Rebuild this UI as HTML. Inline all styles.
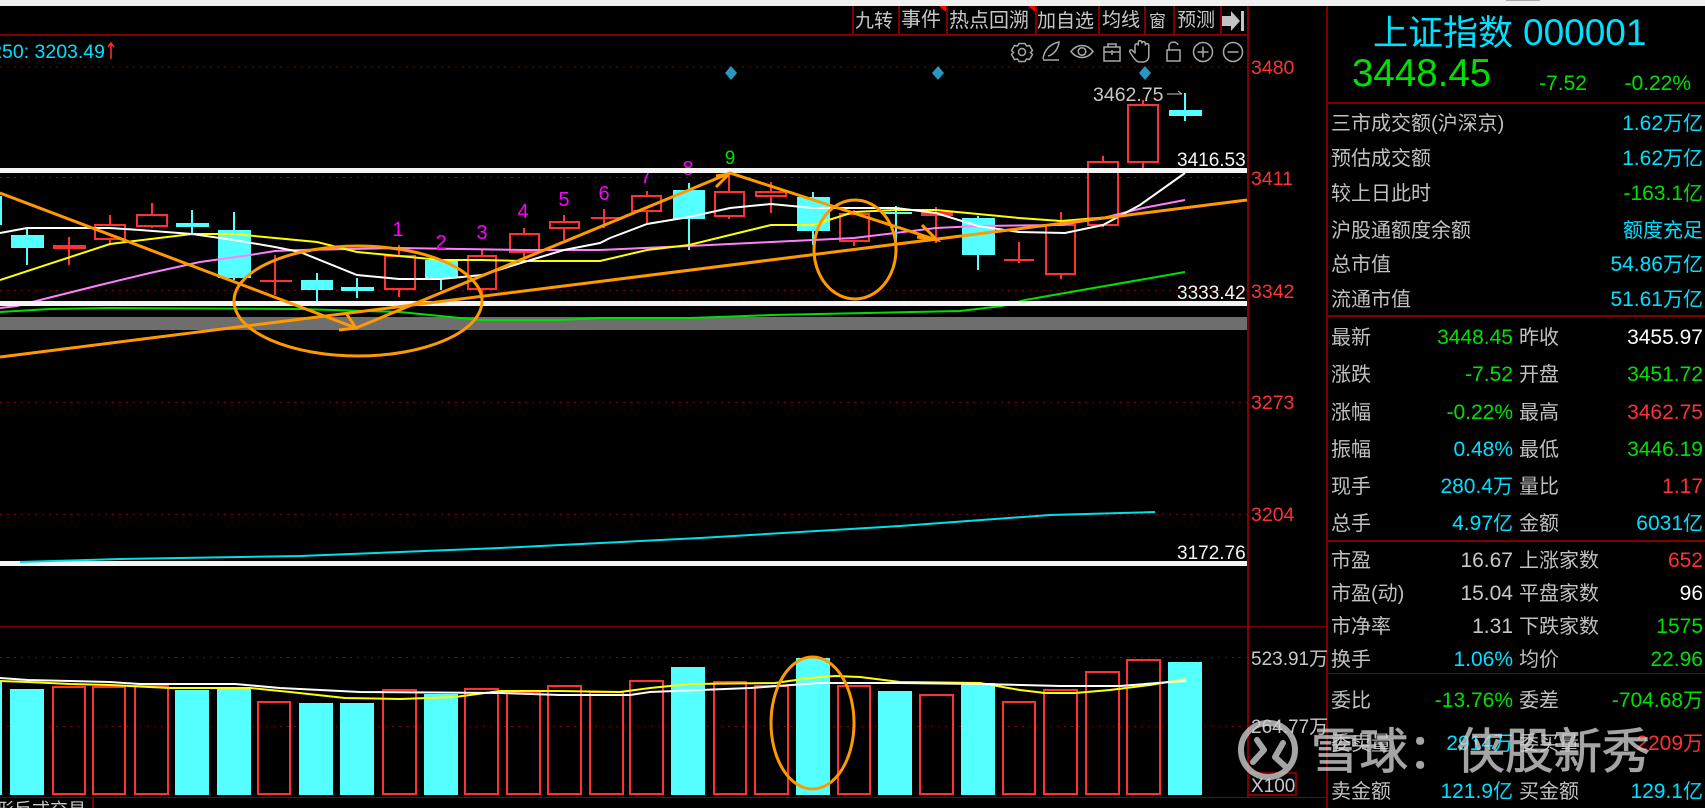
<!DOCTYPE html>
<html lang="zh">
<head>
<meta charset="utf-8">
<title>上证指数</title>
<style>
html,body{margin:0;padding:0;background:#000;width:1705px;height:808px;overflow:hidden}
svg{position:absolute;left:0;top:0;display:block}
text{font-family:"Liberation Sans","Noto Sans CJK SC",sans-serif;font-size:21px;dominant-baseline:auto}
tspan{font-size:20px}
.l{fill:#c0c0c0;font-size:20px}
.c{fill:#00e0ff;text-anchor:end}
.g{fill:#00e000;text-anchor:end}
.r{fill:#ff3232;text-anchor:end}
.w{fill:#fff;text-anchor:end}
.s{fill:#c8c8c8;text-anchor:end}
.t{fill:#c8c8c8;font-size:19px}
.b{fill:#c8c8c8;font-size:18px}
.a{fill:#ff3232;font-size:19.500px}
.m{fill:#f0f;font-size:20px;text-anchor:middle}
.p{fill:#f4f4f4;font-size:19px}
</style>
</head>
<body>
<svg width="1705" height="808" viewBox="0 0 1705 808" xmlns="http://www.w3.org/2000/svg">
<rect width="1705" height="808" fill="#000"/>
<rect width="1705" height="6" fill="#f0f0f0"/>
<rect x="1506" y="0" width="34" height="1" fill="#aaa"/>

<!-- frame lines -->
<g fill="#800000" shape-rendering="crispEdges">
<rect x="0" y="34" width="1248" height="2"/>
<rect x="1247" y="6" width="2" height="792"/>
<rect x="1326" y="6" width="2" height="802"/>
<rect x="1328" y="102" width="377" height="2"/>
<rect x="1328" y="315" width="377" height="2"/>
<rect x="1328" y="540" width="377" height="2"/>
<rect x="1328" y="673" width="377" height="1"/>
<rect x="0" y="626" width="1327" height="1"/>
<rect x="0" y="797" width="1327" height="1"/>
<rect x="852" y="6" width="2" height="28"/>
<rect x="898" y="6" width="2" height="28"/>
<rect x="946" y="6" width="2" height="28"/>
<rect x="1035" y="6" width="2" height="28"/>
<rect x="1098" y="6" width="2" height="28"/>
<rect x="1144" y="6" width="2" height="28"/>
<rect x="1173" y="6" width="2" height="28"/>
<rect x="1220" y="6" width="2" height="28"/>
<rect x="92" y="797" width="2" height="11"/>
</g>
<!-- dotted grid -->
<g stroke="#800000" stroke-width="1" stroke-dasharray="2 5" shape-rendering="crispEdges">
<path d="M0 67H1247M0 177.500H1247M0 290.500H1247M0 402.500H1247M0 514.500H1247M0 657.500H1247M0 726.500H1247" fill="none"/>
</g>

<!-- toolbar -->
<g>
<text x="855" y="27" class="t">九转</text>
<text x="901" y="26" style="font-size:20px;fill:#c8c8c8">事件</text>
<text x="949" y="27" style="font-size:20px;fill:#c8c8c8">热点回溯</text>
<text x="1037" y="27" class="t">加自选</text>
<text x="1102" y="26" class="t">均线</text>
<text x="1149" y="27" style="font-size:17px;fill:#c8c8c8">窗</text>
<text x="1177" y="26" class="t">预测</text>
</g>
<polygon points="939,6 946,6 946,12" fill="#f00"/>
<polygon points="1028,6 1035,6 1035,12" fill="#f00"/>
<polygon points="1222,16 1231,16 1231,11 1240,21 1231,31 1231,26 1222,26" fill="#c4c4c4"/>
<rect x="1241" y="11" width="3" height="20" fill="#c4c4c4"/>

<!-- chart icons -->
<g fill="none" stroke="#a8a8a8" stroke-width="1.500">
<path d="M1019 43.500h6l1.500 2.500 3-.5 3 5-2 2 2 2-3 5-3-.5-1.500 2.500h-6l-1.500-2.500-3 .5-3-5 2-2-2-2 3-5 3 .5z" stroke-linejoin="round"/>
<circle cx="1022" cy="52" r="3.500"/>
<path d="M1043 59c1-9 7-15 16-17-1 8-6 13-11 14M1043 60h16"/>
<path d="M1071 51.500c6-8 16-8 22 0-6 8-16 8-22 0z"/>
<circle cx="1082" cy="51.500" r="3.800"/>
<path d="M1104 47h16v14h-16zM1104 52h16M1108 47v-3h8v3M1112 50v5"/>
<path d="M1135 53v-8a1.800 1.800 0 0 1 3.300 0v-3a1.800 1.800 0 0 1 3.500 0v1a1.800 1.800 0 0 1 3.500 0v2a1.800 1.800 0 0 1 3.500 0v11c0 3-2 6-6 6h-3c-3 0-4-2-6-4l-4-6c-1-2 2-3 3-1z" stroke-linejoin="round"/>
<path d="M1167 50h13v11h-13zM1169 50v-4c0-5 8-5 9-1"/>
<circle cx="1203" cy="52" r="9.500"/><path d="M1197.500 52h11M1203 46.500v11"/>
<circle cx="1233" cy="52" r="9.500"/><path d="M1227.500 52h11"/>
</g>

<!-- legend -->
<text x="105" y="58" style="font-size:19.500px;fill:#00e0ff;text-anchor:end">250: 3203.49</text>
<path d="M111 43v16M108 47l3-4 3 4" fill="none" stroke="#ff3232" stroke-width="1.500"/>

<!-- diamonds -->
<g fill="#2a96c4">
<polygon points="731,66 737,73 731,80 725,73"/>
<polygon points="938,66 944,73 938,80 932,73"/>
<polygon points="1145,66 1151,73 1145,80 1139,73"/>
</g>

<!-- gray band under everything -->
<rect x="0" y="317" width="1247" height="13" fill="#6e6e6e" shape-rendering="crispEdges"/>

<!-- candles: cyan -->
<g fill="#54ffff" shape-rendering="crispEdges">
<rect x="0" y="196" width="2" height="29"/>
<rect x="11" y="235" width="33" height="13"/><rect x="26" y="228" width="2" height="37"/>
<rect x="176" y="223" width="33" height="4"/><rect x="191" y="210" width="2" height="25"/>
<rect x="218" y="230" width="33" height="48"/><rect x="233" y="212" width="2" height="68"/>
<rect x="301" y="280" width="32" height="10"/><rect x="316" y="273" width="2" height="29"/>
<rect x="341" y="287" width="33" height="4"/><rect x="356" y="278" width="2" height="20"/>
<rect x="425" y="260" width="33" height="18"/><rect x="440" y="278" width="2" height="12"/>
<rect x="673" y="190" width="32" height="29"/><rect x="688" y="183" width="2" height="67"/>
<rect x="797" y="197" width="33" height="34"/><rect x="812" y="192" width="2" height="53"/>
<rect x="881" y="212" width="31" height="2"/><rect x="895" y="206" width="2" height="42"/>
<rect x="962" y="218" width="33" height="37"/><rect x="977" y="216" width="2" height="54"/>
<rect x="1169" y="110" width="33" height="6"/><rect x="1184" y="93" width="2" height="28"/>
</g>
<!-- candles: red -->
<g fill="#ff3232" shape-rendering="crispEdges">
<rect x="53" y="245" width="33" height="4"/><rect x="68" y="237" width="2" height="28"/>
<rect x="260" y="280" width="32" height="2"/><rect x="274" y="255" width="2" height="40"/>
<rect x="591" y="217" width="29" height="2"/><rect x="603" y="209" width="2" height="19"/>
<rect x="921" y="212" width="32" height="4"/><rect x="935" y="207" width="2" height="36"/>
<rect x="1004" y="259" width="30" height="2"/><rect x="1018" y="242" width="2" height="21"/>
<rect x="109" y="215" width="2" height="9"/><rect x="109" y="240" width="2" height="4"/>
<rect x="151" y="203" width="2" height="11"/><rect x="151" y="227" width="2" height="1"/>
<rect x="398" y="245" width="2" height="10"/><rect x="398" y="290" width="2" height="7"/>
<rect x="481" y="250" width="2" height="5"/><rect x="481" y="290" width="2" height="5"/>
<rect x="523" y="228" width="2" height="5"/><rect x="523" y="253" width="2" height="5"/>
<rect x="563" y="215" width="2" height="6"/><rect x="563" y="229" width="2" height="11"/>
<rect x="646" y="191" width="2" height="4"/><rect x="646" y="212" width="2" height="11"/>
<rect x="728" y="176" width="2" height="15"/><rect x="728" y="217" width="2" height="2"/>
<rect x="770" y="182" width="2" height="9"/><rect x="770" y="197" width="2" height="16"/>
<rect x="853" y="210" width="2" height="3"/><rect x="853" y="242" width="2" height="4"/>
<rect x="1060" y="212" width="2" height="12"/><rect x="1060" y="275" width="2" height="4"/>
<rect x="1102" y="156" width="2" height="5"/><rect x="1102" y="226" width="2" height="1"/>
<rect x="1142" y="100" width="2" height="4"/><rect x="1142" y="163" width="2" height="5"/>
</g>
<g fill="none" stroke="#ff3232" stroke-width="2" shape-rendering="crispEdges">
<rect x="95" y="225" width="30" height="14"/>
<rect x="137" y="215" width="30" height="11"/>
<rect x="385" y="256" width="30" height="33"/>
<rect x="468" y="256" width="28" height="33"/>
<rect x="510" y="234" width="29" height="18"/>
<rect x="550" y="222" width="29" height="6"/>
<rect x="632" y="196" width="29" height="15"/>
<rect x="715" y="192" width="29" height="24"/>
<rect x="756" y="192" width="30" height="4"/>
<rect x="840" y="214" width="29" height="27"/>
<rect x="1046" y="225" width="29" height="49"/>
<rect x="1088" y="162" width="30" height="63"/>
<rect x="1128" y="105" width="30" height="57"/>
</g>

<!-- moving averages -->
<g fill="none" stroke-width="2">
<polyline stroke="#00e000" points="0,312 50,309 110,308 300,309 400,312 480,320 560,320 600,318 690,318 772,315 960,311 1002,306 1025,300 1185,272"/>
<polyline stroke="#ff80ff" points="0,308 17,306 40,300 100,285 150,273 200,262 250,255 275,251 300,250 399,248 524,250 600,250 689,246 771,242 813,240 854,238 936,228 978,226 1061,225 1103,218 1143,208 1185,200"/>
<polyline stroke="#ffff00" points="0,280 110,244 192,234 234,234 275,238 317,242 357,252 399,256 441,260 482,260 524,261 600,261 647,250 689,245 771,225 813,225 854,212 896,210 936,210 978,214 1019,218 1061,221 1110,217"/>
<polyline stroke="#ffffff" points="0,233 27,228 110,228 140,230 192,234 234,240 275,247 300,252 357,275 399,279 441,279 482,275 524,262 564,250 600,243 610,238 647,224 689,217 730,208 771,204 813,208 854,208 896,208 936,213 978,226 1019,232 1065,233 1103,225 1140,205 1185,173"/>
</g>

<!-- TD numbers -->
<text x="398" y="236" class="m">1</text>
<text x="441" y="249" class="m">2</text>
<text x="482" y="239" class="m">3</text>
<text x="523" y="218" class="m">4</text>
<text x="564" y="206" class="m">5</text>
<text x="604" y="200" class="m">6</text>
<text x="646" y="183" class="m">7</text>
<text x="688" y="175" class="m">8</text>
<text x="730" y="164" class="m" style="fill:#00e000;font-size:19px">9</text>

<!-- annotation bars -->
<g shape-rendering="crispEdges">
<rect x="0" y="168" width="1247" height="5" fill="#f4f4f4"/>
<rect x="0" y="301" width="1247" height="5" fill="#f4f4f4"/>
<rect x="0" y="561" width="1247" height="5" fill="#f4f4f4"/>
</g>

<!-- lower cyan MA -->
<polyline fill="none" stroke="#00e0e8" stroke-width="2" points="20,562 120,559 300,556 500,548 700,538 900,526 1050,515 1155,512"/>

<!-- orange annotations -->
<g fill="none" stroke="#ff9900" stroke-width="3">
<path d="M0 193L356 328L730 173L937 240"/>
<path d="M0 357L1247 200"/>
<path d="M339 330L356 328L346 313"/>
<path d="M716 187L729 174L716 176"/>
<path d="M922 225L937 240L917 237"/>
<ellipse cx="358" cy="301" rx="124" ry="55"/>
<ellipse cx="855" cy="249.500" rx="41" ry="49.500"/>
</g>

<!-- price tags -->
<text x="1093" y="101" class="t" style="font-size:19.500px">3462.75</text>
<path d="M1167 94h15M1182 94v0M1178 91l4 3" stroke="#c8c8c8" fill="none" stroke-width="1"/>
<text x="1177" y="166" class="p">3416.53</text>
<text x="1177" y="299" class="p">3333.42</text>
<text x="1177" y="559" class="p">3172.76</text>

<!-- axis -->
<text x="1251" y="74" class="a">3480</text>
<text x="1251" y="185" class="a">3411</text>
<text x="1251" y="298" class="a">3342</text>
<text x="1251" y="409" class="a">3273</text>
<text x="1251" y="521" class="a">3204</text>
<text x="1251" y="665" class="t">523.91万</text>
<text x="1251" y="733" class="t">264.77万</text>

<!-- volume bars -->
<g fill="#54ffff" shape-rendering="crispEdges">
<rect x="0" y="682" width="2" height="113"/>
<rect x="10" y="689" width="34" height="106"/>
<rect x="175" y="690" width="34" height="105"/>
<rect x="217" y="688" width="34" height="107"/>
<rect x="299" y="703" width="34" height="92"/>
<rect x="340" y="703" width="34" height="92"/>
<rect x="424" y="694" width="34" height="101"/>
<rect x="671" y="667" width="34" height="128"/>
<rect x="796" y="658" width="34" height="137"/>
<rect x="878" y="691" width="34" height="104"/>
<rect x="961" y="683" width="34" height="112"/>
<rect x="1168" y="662" width="34" height="133"/>
</g>
<g fill="none" stroke="#ff3232" stroke-width="2" shape-rendering="crispEdges">
<rect x="53" y="687" width="32" height="107"/>
<rect x="93" y="687" width="32" height="107"/>
<rect x="135" y="686" width="33" height="108"/>
<rect x="258" y="702" width="32" height="92"/>
<rect x="383" y="690" width="33" height="104"/>
<rect x="465" y="689" width="33" height="105"/>
<rect x="507" y="692" width="33" height="102"/>
<rect x="548" y="686" width="33" height="108"/>
<rect x="590" y="692" width="33" height="102"/>
<rect x="630" y="681" width="33" height="113"/>
<rect x="714" y="682" width="32" height="112"/>
<rect x="755" y="686" width="33" height="108"/>
<rect x="838" y="686" width="32" height="108"/>
<rect x="920" y="695" width="33" height="99"/>
<rect x="1003" y="702" width="32" height="92"/>
<rect x="1044" y="690" width="33" height="104"/>
<rect x="1086" y="672" width="33" height="122"/>
<rect x="1127" y="660" width="33" height="134"/>
</g>
<g fill="none" stroke-width="2">
<polyline stroke="#ffff00" points="0,681 28,682 70,684 110,685 170,688 250,688 290,692 345,698 400,699 455,697 500,691 560,691 620,692 650,688 690,684 775,683 810,678 835,676 860,677 900,682 980,683 1020,690 1045,693 1075,693 1110,690 1150,685 1186,679"/>
<polyline stroke="#ffffff" points="0,678 28,680 70,681 110,682 140,684 235,684 280,688 360,692 500,693 560,695 630,695 650,692 750,688 820,683 900,683 980,684 1060,686 1120,686 1170,682 1186,681"/>
</g>
<ellipse cx="812.500" cy="723" rx="41.500" ry="66" fill="none" stroke="#ff9900" stroke-width="3"/>

<!-- X100 box -->
<rect x="1248" y="773" width="48" height="22" fill="none" stroke="#800000" stroke-width="2"/>
<text x="1251" y="792" class="t">X100</text>

<!-- bottom tab -->
<text x="-4" y="816" style="font-size:18px;fill:#c8c8c8">形反式交易</text>

<!-- right panel header -->
<text x="1373" y="45" style="font-size:35px;fill:#00e0ff">上证指数</text>
<text x="1523" y="45" style="font-size:37px;fill:#00e0ff">000001</text>
<text x="1352" y="86" style="font-size:38.500px;fill:#00e000">3448.45</text>
<text x="1587" y="90" class="g">-7.52</text>
<text x="1691" y="90" class="g">-0.22%</text>

<!-- block 1 -->
<g>
<text x="1331" y="130" class="l">三市成交额(沪深京)</text><text x="1703" y="130" class="c">1.62<tspan>万亿</tspan></text>
<text x="1331" y="165" class="l">预估成交额</text><text x="1703" y="165" class="c">1.62<tspan>万亿</tspan></text>
<text x="1331" y="200" class="l">较上日此时</text><text x="1703" y="200" class="g">-163.1<tspan>亿</tspan></text>
<text x="1331" y="237" class="l">沪股通额度余额</text><text x="1703" y="237" class="c" style="font-size:20px">额度充足</text>
<text x="1331" y="271" class="l">总市值</text><text x="1703" y="271" class="c">54.86<tspan>万亿</tspan></text>
<text x="1331" y="306" class="l">流通市值</text><text x="1703" y="306" class="c">51.61<tspan>万亿</tspan></text>
</g>

<!-- block 2 -->
<g>
<text x="1331" y="344" class="l">最新</text><text x="1513" y="344" class="g">3448.45</text><text x="1519" y="344" class="l">昨收</text><text x="1703" y="344" class="w">3455.97</text>
<text x="1331" y="381" class="l">涨跌</text><text x="1513" y="381" class="g">-7.52</text><text x="1519" y="381" class="l">开盘</text><text x="1703" y="381" class="g">3451.72</text>
<text x="1331" y="419" class="l">涨幅</text><text x="1513" y="419" class="g">-0.22%</text><text x="1519" y="419" class="l">最高</text><text x="1703" y="419" class="r">3462.75</text>
<text x="1331" y="456" class="l">振幅</text><text x="1513" y="456" class="c">0.48%</text><text x="1519" y="456" class="l">最低</text><text x="1703" y="456" class="g">3446.19</text>
<text x="1331" y="493" class="l">现手</text><text x="1513" y="493" class="c">280.4<tspan>万</tspan></text><text x="1519" y="493" class="l">量比</text><text x="1703" y="493" class="r">1.17</text>
<text x="1331" y="530" class="l">总手</text><text x="1513" y="530" class="c">4.97<tspan>亿</tspan></text><text x="1519" y="530" class="l">金额</text><text x="1703" y="530" class="c">6031<tspan>亿</tspan></text>
</g>

<!-- block 3 -->
<g>
<text x="1331" y="567" class="l">市盈</text><text x="1513" y="567" class="s">16.67</text><text x="1519" y="567" class="l">上涨家数</text><text x="1703" y="567" class="r">652</text>
<text x="1331" y="600" class="l">市盈(动)</text><text x="1513" y="600" class="s">15.04</text><text x="1519" y="600" class="l">平盘家数</text><text x="1703" y="600" class="w">96</text>
<text x="1331" y="633" class="l">市净率</text><text x="1513" y="633" class="s">1.31</text><text x="1519" y="633" class="l">下跌家数</text><text x="1703" y="633" class="g">1575</text>
<text x="1331" y="666" class="l">换手</text><text x="1513" y="666" class="c">1.06%</text><text x="1519" y="666" class="l">均价</text><text x="1703" y="666" class="g">22.96</text>
</g>

<!-- block 4 -->
<g>
<text x="1331" y="707" class="l">委比</text><text x="1513" y="707" class="g">-13.76%</text><text x="1519" y="707" class="l">委差</text><text x="1703" y="707" class="g">-704.68<tspan>万</tspan></text>
<text x="1331" y="750" class="l">委卖量</text><text x="1513" y="750" class="c">2914<tspan>万</tspan></text><text x="1519" y="750" class="l">委买量</text><text x="1703" y="750" class="r">2209<tspan>万</tspan></text>
<text x="1331" y="798" class="l">卖金额</text><text x="1513" y="798" class="c">121.9<tspan>亿</tspan></text><text x="1519" y="798" class="l">买金额</text><text x="1703" y="798" class="c">129.1<tspan>亿</tspan></text>
</g>

<!-- watermark -->
<g opacity=".78">
<circle cx="1268" cy="750" r="27" fill="none" stroke="#d2d2d2" stroke-width="6"/>
<path d="M1257 740L1264 750L1253 762" fill="none" stroke="#d2d2d2" stroke-width="6" stroke-linecap="round" stroke-linejoin="round"/>
<path d="M1283 743L1275 757L1287 768" fill="none" stroke="#d2d2d2" stroke-width="6" stroke-linecap="round" stroke-linejoin="round"/>
<text x="1311" y="768" style="font-size:48.500px;fill:#d2d2d2;stroke:#d2d2d2;stroke-width:.8px;font-family:'Noto Sans CJK SC',sans-serif">雪球：侠股新秀</text>
</g>
</svg>
</body>
</html>
